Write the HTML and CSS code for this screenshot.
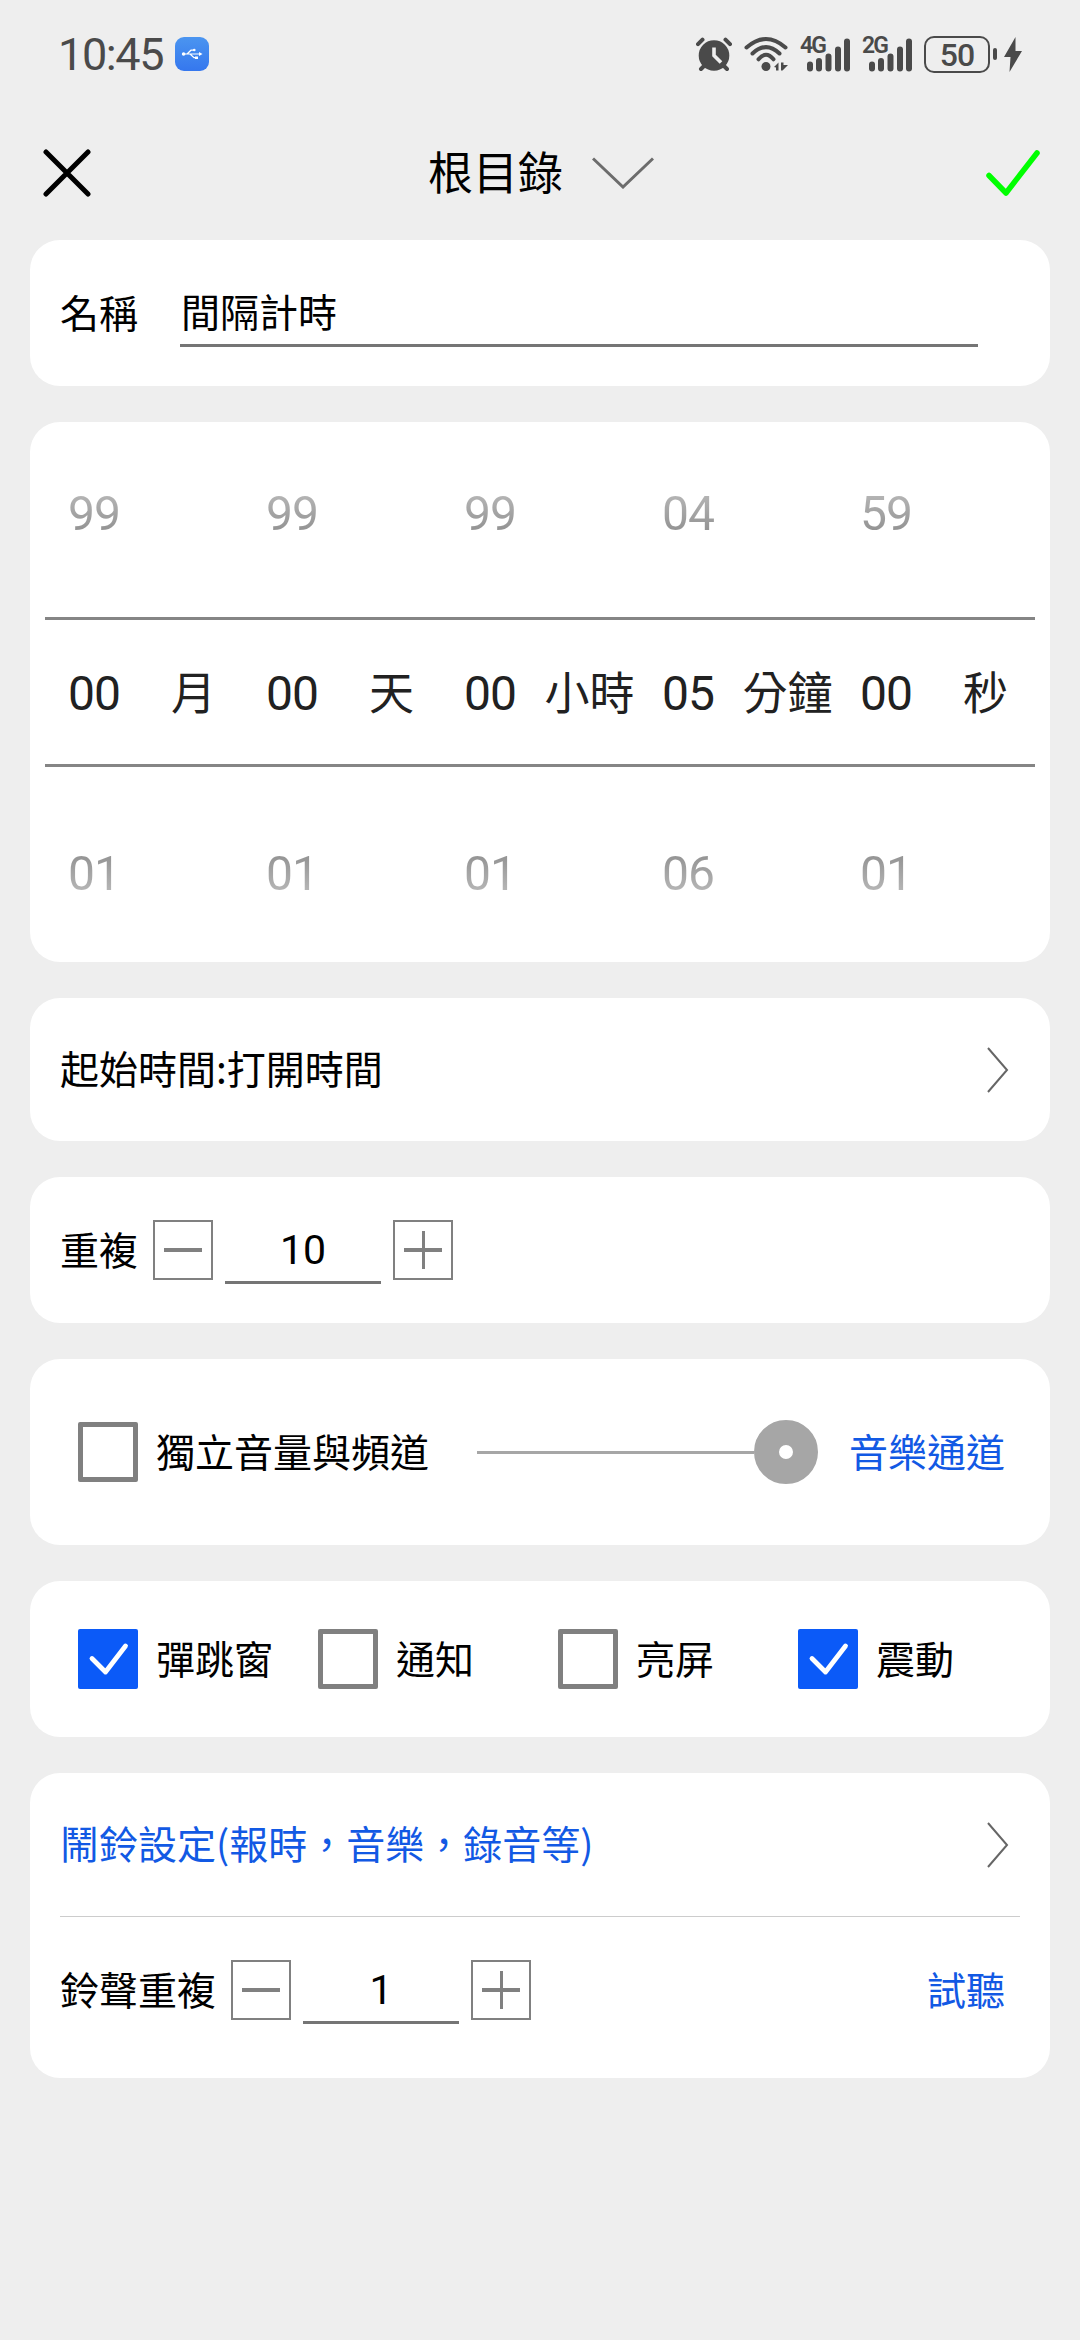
FILE: index.html
```html
<!DOCTYPE html>
<html lang="zh-Hant">
<head>
<meta charset="utf-8">
<title>間隔計時</title>
<link rel="stylesheet" href="styles.css">
</head>
<body>
<div class="status">
  <span class="clock">10:45</span>
  <svg class="usb" viewBox="0 0 34 34" width="34" height="34"><defs><linearGradient id="usbfill" x1="0" y1="0" x2="0" y2="1"><stop offset="0" stop-color="#4b95f0"/><stop offset="1" stop-color="#3577ee"/></linearGradient></defs><rect width="34" height="34" rx="9" fill="url(#usbfill)"/><g stroke="#fff" stroke-width="1.2" fill="none"><path d="M8 17H26M12 17L16 13.2H19M15 17L19 20.7H21"/></g><circle cx="8.6" cy="17" r="1.8" fill="#fff"/><circle cx="19.3" cy="13" r="1.3" fill="#fff"/><rect x="20" y="19.5" width="3" height="2.5" fill="#fff"/><path d="M24 15l3.500 2-3.500 2z" fill="#fff"/></svg>
  <div class="signals">
    <svg class="alarm" viewBox="0 0 36 36" width="36" height="36"><circle cx="18" cy="19.500" r="15.300" fill="#4a4a4a"/><path d="M2 8.200L6.500 3.700M34 8.200L29.500 3.700M5 33L8.500 29.500M31 33L27.500 29.500" stroke="#4a4a4a" stroke-width="4" stroke-linecap="round"/><path d="M18 11.500V19.500L25 26.500" fill="none" stroke="#eee" stroke-width="3.600"/></svg>
    <svg class="wifi" viewBox="0 0 44 36" width="44" height="36"><g fill="none" stroke="#4a4a4a" stroke-width="4" stroke-linecap="round"><path d="M2.500 11.500Q22-5.500 41.500 11.500"/><path d="M8.500 17.500Q22 4.700 35.500 17.500"/><path d="M14.500 23.300Q22 14 29.500 23.300"/></g><circle cx="22" cy="30.500" r="4.500" fill="#4a4a4a"/><path d="M30 31L34.500 26.500V34.500H32V31.500zM37 26.500H39.500V29H44L38.500 34.500H37z" fill="#4a4a4a"/></svg>
    <div class="cell"><span class="gen">4G</span><svg viewBox="0 0 52 36" width="52" height="36"><path d="M12 28.500v4M21 25v7.500M30.500 20.500v12M40 13.500v19M49 5.500v27" stroke="#4a4a4a" stroke-width="6" stroke-linecap="round"/></svg></div>
    <div class="cell"><span class="gen">2G</span><svg viewBox="0 0 52 36" width="52" height="36"><path d="M12 28.500v4M21 25v7.500M30.500 20.500v12M40 13.500v19M49 5.500v27" stroke="#4a4a4a" stroke-width="6" stroke-linecap="round"/></svg></div>
    <div class="battery">50</div>
    <div class="tip"></div>
    <svg class="bolt" viewBox="0 0 18 35" width="18" height="35"><path d="M11.500 0L0 20H6.500L5.500 35L18 14H11.500z" fill="#4a4a4a"/></svg>
  </div>
</div>
<header class="bar">
  <svg viewBox="0 0 48 48" width="48" height="48"><path d="M3 3L45 45M45 3L3 45" stroke="#000" stroke-width="5" stroke-linecap="round"/></svg>
  <div class="title"><span class="folder">根目錄</span><svg viewBox="0 0 62 32" width="62" height="32"><path d="M1 1.500L31 30L61 1.500" fill="none" stroke="#6c6c6c" stroke-width="3"/></svg></div>
  <svg viewBox="0 0 54 46" width="54" height="46"><path d="M3 25.500L20 43L51 3" fill="none" stroke="#0f0" stroke-width="5.500" stroke-linecap="round" stroke-linejoin="round"/></svg>
</header>
<main class="cards">
  <section class="card name"><span class="label">名稱</span><div class="field">間隔計時</div></section>
  <section class="card picker">
    <div class="row above"><b>99</b><b>99</b><b>99</b><b>04</b><b>59</b></div>
    <div class="row now"><b>00</b><i>月</i><b>00</b><i>天</i><b>00</b><i>小時</i><b>05</b><i>分鐘</i><b>00</b><i>秒</i></div>
    <div class="row below"><b>01</b><b>01</b><b>01</b><b>06</b><b>01</b></div>
  </section>
  <section class="card start"><span class="label">起始時間:打開時間</span><svg class="go" viewBox="0 0 22 46" width="22" height="46"><path d="M1 1L20 23L1 45" fill="none" stroke="#666" stroke-width="2"/></svg></section>
  <section class="card repeat">
    <span class="label">重複</span>
    <div class="stepper"><span class="step"><svg viewBox="0 0 38 38" width="38" height="38"><path d="M0 19H38" stroke="#808080" stroke-width="4"/></svg></span><span class="count">10</span><span class="step"><svg viewBox="0 0 38 38" width="38" height="38"><path d="M0 19H38" stroke="#808080" stroke-width="4"/><path d="M19.500 0V38" stroke="#808080" stroke-width="3"/></svg></span></div>
  </section>
  <section class="card volume">
    <span class="box"></span><span class="label caption">獨立音量與頻道</span>
    <div class="slider"><span class="track"></span><span class="thumb"></span></div>
    <span class="label link">音樂通道</span>
  </section>
  <section class="card options">
    <div class="option"><span class="box on"><svg viewBox="0 0 60 60" width="60" height="60"><path d="M14 29.500L27.500 43L47.500 17" fill="none" stroke="#fff" stroke-width="4.800" stroke-linecap="round" stroke-linejoin="round"/></svg></span><span class="label caption">彈跳窗</span></div>
    <div class="option"><span class="box"></span><span class="label caption">通知</span></div>
    <div class="option"><span class="box"></span><span class="label caption">亮屏</span></div>
    <div class="option"><span class="box on"><svg viewBox="0 0 60 60" width="60" height="60"><path d="M14 29.500L27.500 43L47.500 17" fill="none" stroke="#fff" stroke-width="4.800" stroke-linecap="round" stroke-linejoin="round"/></svg></span><span class="label caption">震動</span></div>
  </section>
  <section class="card ring">
    <div class="settings"><span class="label link">鬧鈴設定(報時，音樂，錄音等)</span><svg class="go" viewBox="0 0 22 46" width="22" height="46"><path d="M1 1L20 23L1 45" fill="none" stroke="#666" stroke-width="2"/></svg></div>
    <div class="times">
      <span class="label">鈴聲重複</span>
      <div class="stepper"><span class="step"><svg viewBox="0 0 38 38" width="38" height="38"><path d="M0 19H38" stroke="#808080" stroke-width="4"/></svg></span><span class="count">1</span><span class="step"><svg viewBox="0 0 38 38" width="38" height="38"><path d="M0 19H38" stroke="#808080" stroke-width="4"/><path d="M19.500 0V38" stroke="#808080" stroke-width="3"/></svg></span></div>
      <span class="label link">試聽</span>
    </div>
  </section>
</main>
</body>
</html>
```
FILE: styles.css
```css
* { box-sizing: border-box; }
body {
  margin: 0;
  width: 1080px;
  height: 2340px;
  background: #eee;
  color: #000;
  font: 39px/48px "Noto Sans CJK TC", sans-serif;
  white-space: nowrap;
}
svg { display: block; flex: none; }
.status {
  height: 108px;
  padding: 0 58px;
  display: flex;
  align-items: center;
  color: #4a4a4a;
  font-family: Roboto, sans-serif;
}
.clock { width: 117px; padding-top: 2px; font-size: 45px; font-weight: 400; letter-spacing: -1.4px; }
.signals { display: flex; align-items: center; margin-left: auto; }
.wifi { margin-left: 12px; }
.cell { position: relative; margin-left: 10px; }
.gen {
  position: absolute;
  left: 2px;
  top: 1px;
  font-size: 23px;
  line-height: 18px;
  font-weight: 600;
  letter-spacing: -2px;
}
.battery {
  width: 66px;
  height: 37px;
  margin-left: 12px;
  border: 2.5px solid #4a4a4a;
  border-radius: 10px;
  font-size: 32px;
  line-height: 34px;
  font-weight: 500;
  letter-spacing: -1px;
  text-align: center;
}
.tip { width: 4px; height: 12px; margin: 0 7px 0 3px; border-radius: 2px; background: #4a4a4a; }
.bar {
  height: 132px;
  padding: 0 40px 3px 43px;
  display: flex;
  align-items: center;
  justify-content: space-between;
}
.title { display: flex; align-items: center; gap: 29px; margin-left: 5px; font-size: 45px; }
.folder { padding-bottom: 4px; }
.cards { padding: 0 30px; display: flex; flex-direction: column; gap: 36px; }
.card { border-radius: 30px; background: #fff; display: flex; align-items: center; padding: 0 45px 0 30px; }
.label { padding-bottom: 5px; }
.name { height: 146px; }
.name .label { width: 120px; }
.field { width: 798px; height: 68px; border-bottom: 3px solid #757575; padding: 7px 0 0 1px; }
.picker { height: 540px; padding: 0 15px; flex-direction: column; align-items: stretch; }
.row { height: 180px; display: grid; grid-template-columns: repeat(5, 198px); align-items: center; }
.row b, .row i { width: 99px; text-align: center; font-style: normal; font-weight: 400; color: #212121; }
.row b { padding: 3px 1px 0 0; font-family: Roboto, sans-serif; font-size: 48px; letter-spacing: -1px; }
.row i { padding-bottom: 3px; font-size: 45px; }
.now { height: 150px; margin: 15px 0; grid-template-columns: repeat(10, 99px); border: solid #858585; border-width: 3px 0; }
.row.above b { color: transparent; background: linear-gradient(#bcbcbc, #8c8c8c); background-clip: text; }
.row.below b { color: transparent; background: linear-gradient(#8c8c8c, #bcbcbc); background-clip: text; }
.start { height: 143px; justify-content: space-between; padding-right: 41px; }
.repeat { height: 146px; }
.stepper { display: flex; align-items: center; gap: 12px; margin-left: 15px; }
.step { width: 60px; height: 60px; border: 2px solid #808080; display: flex; align-items: center; justify-content: center; }
.count {
  width: 156px;
  height: 68px;
  border-bottom: 3px solid #757575;
  font: 41px/69px Roboto, sans-serif;
  text-align: center;
}
.volume { height: 186px; padding-left: 48px; }
.box { width: 60px; height: 60px; border: 5px solid #808080; border-radius: 2px; flex: none; }
.box.on { border: 0; background: #0b5af8; }
.caption { margin-left: 18px; }
.slider { display: flex; align-items: center; margin: 0 31px 0 auto; }
.track { width: 277px; height: 3px; background: #a6a6a6; }
.thumb { width: 64px; height: 64px; border: 25px solid #a6a6a6; border-radius: 50%; background: #fff; }
.link { color: #1259e4; }
.options { height: 156px; padding: 0 0 0 48px; }
.option { width: 240px; display: flex; align-items: center; }
.ring { display: block; padding: 0 30px 15px; }
.settings { height: 144px; border-bottom: 1px solid #ccc; padding-right: 11px; display: flex; align-items: center; justify-content: space-between; }
.times { height: 146px; padding-right: 15px; display: flex; align-items: center; }
.times .link { margin-left: auto; }
```
